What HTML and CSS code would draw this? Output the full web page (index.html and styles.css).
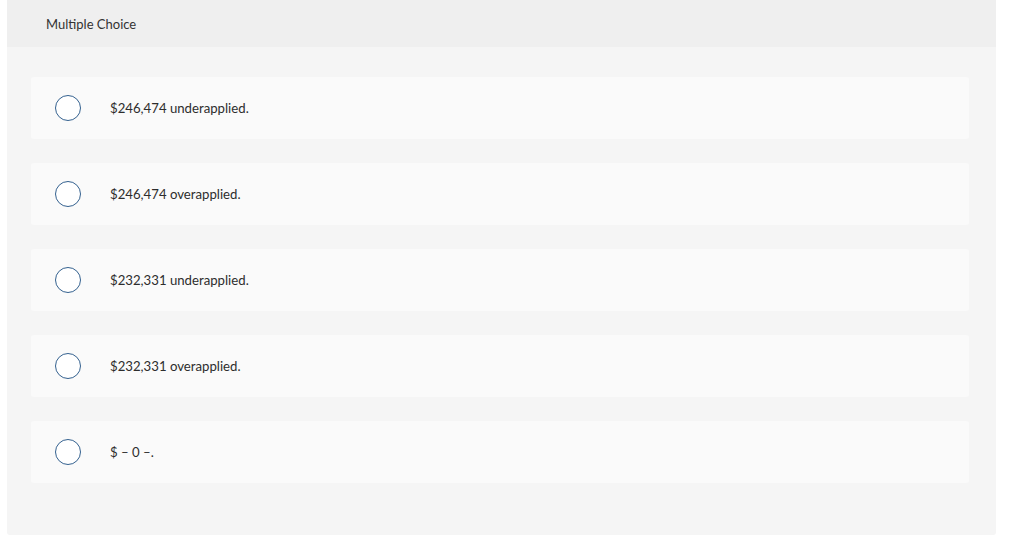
FILE: index.html
```html
<!DOCTYPE html>
<html>
<head>
<meta charset="utf-8">
<link rel="stylesheet" href="styles.css">
</head>
<body>
<div class="question">
  <div class="q-header">Multiple Choice</div>
  <div class="q-body">
    <div class="choice"><span class="radio"></span><span class="label">$246,474 underapplied.</span></div>
    <div class="choice"><span class="radio"></span><span class="label">$246,474 overapplied.</span></div>
    <div class="choice"><span class="radio"></span><span class="label">$232,331 underapplied.</span></div>
    <div class="choice"><span class="radio"></span><span class="label">$232,331 overapplied.</span></div>
    <div class="choice"><span class="radio"></span><span class="label">$ – 0 –.</span></div>
  </div>
</div>
</body>
</html>
```
FILE: styles.css
```css
html, body {
  margin: 0;
  padding: 0;
  background: #ffffff;
}
body {
  font-family: "Lato", "Open Sans", sans-serif;
  color: #333333;
}
.question {
  margin-left: 7px;
  width: 989px;
  height: 535px;
  background: #f5f5f5;
  border-radius: 0 0 3px 3px;
  display: flex;
  flex-direction: column;
}
.q-header {
  height: 47px;
  box-sizing: border-box;
  background: #efefef;
  padding-left: 39px;
  padding-top: 16px;
  font-size: 13px;
  line-height: 16px;
  color: #333;
}
.q-body {
  padding: 30px 27px 0 24px;
  display: flex;
  flex-direction: column;
  gap: 24px;
}
.choice {
  height: 62px;
  background: #fafafa;
  border-radius: 3px;
  display: flex;
  align-items: center;
  padding-left: 24px;
}
.radio {
  width: 24px;
  height: 24px;
  border: 1px solid #34618f;
  border-radius: 50%;
  background: #ffffff;
  flex: none;
}
.label {
  margin-left: 29px;
  font-size: 13.2px;
  color: #2d2d2d;
}
```
